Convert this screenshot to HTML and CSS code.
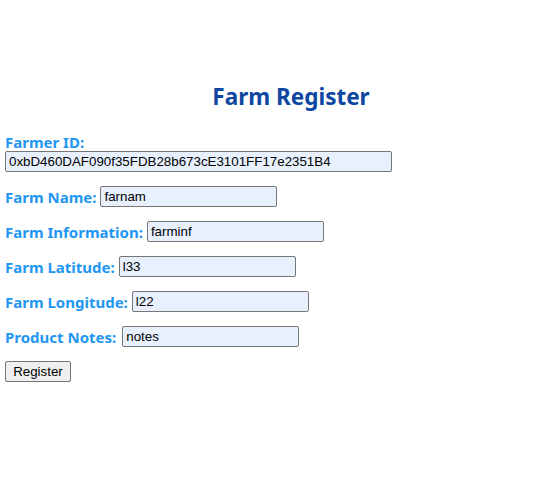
FILE: index.html
```html
<!DOCTYPE html>
<html>
<head>
<meta charset="utf-8">
<link rel="stylesheet" href="styles.css">
</head>
<body>
<div class="page">
  <h2 class="title">Farm Register</h2>
  <form class="form">
    <div class="field field-block">
      <label class="label">Farmer ID:</label>
      <input class="input input-wide" type="text" value="0xbD460DAF090f35FDB28b673cE3101FF17e2351B4">
    </div>
    <div class="field">
      <label class="label">Farm Name:</label>
      <input class="input" type="text" value="farnam">
    </div>
    <div class="field">
      <label class="label">Farm Information:</label>
      <input class="input" type="text" value="farminf">
    </div>
    <div class="field">
      <label class="label">Farm Latitude:</label>
      <input class="input" type="text" value="l33">
    </div>
    <div class="field">
      <label class="label">Farm Longitude:</label>
      <input class="input" type="text" value="l22">
    </div>
    <div class="field">
      <label class="label label-notes">Product Notes:</label>
      <input class="input" type="text" value="notes">
    </div>
    <div class="field">
      <button class="button" type="button">Register</button>
    </div>
  </form>
</div>
</body>
</html>
```
FILE: styles.css
```css
html, body {
  margin: 0;
  padding: 0;
  background: #ffffff;
}
.page {
  padding: 81px 5px 0 5px;
  font-family: "Noto Sans", "Open Sans", sans-serif;
}
.title {
  margin: 0 0 20px 0;
  padding-left: 28px;
  text-align: center;
  font-size: 22.5px;
  line-height: 32px;
  font-weight: 700;
  color: #0d47a1;
}
.form {
  display: flex;
  flex-direction: column;
  gap: 14px;
}
.field {
  display: flex;
  align-items: center;
  gap: 4px;
  height: 21px;
}
.field-block {
  flex-direction: column;
  align-items: flex-start;
  gap: 0;
  height: auto;
}
.label {
  font-size: 15px;
  line-height: 18px;
  font-weight: 700;
  color: #2196f3;
}
.label-notes {
  margin-right: 2px;
}
.input {
  box-sizing: border-box;
  width: 177px;
  height: 21px;
  margin: 0;
  padding: 1px 3px;
  border: 1px solid #767676;
  border-radius: 2px;
  background: #e8f0fe;
  font-family: "Liberation Sans", Arial, sans-serif;
  font-size: 13.33px;
  color: #000000;
}
.input-wide {
  width: 387px;
}
.button {
  box-sizing: border-box;
  width: 66px;
  height: 21px;
  margin: 0;
  padding: 1px 6px;
  border: 1px solid #767676;
  border-radius: 2px;
  background: #efefef;
  font-family: "Liberation Sans", Arial, sans-serif;
  font-size: 13.33px;
  color: #000000;
}
```
